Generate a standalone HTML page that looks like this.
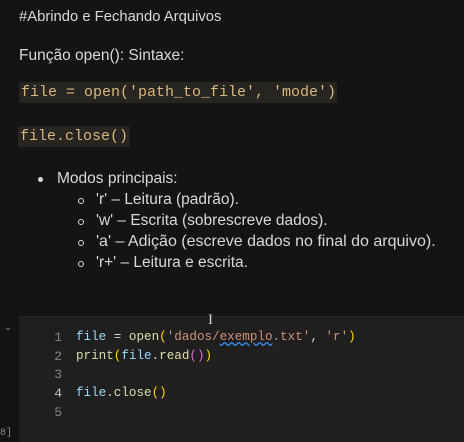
<!DOCTYPE html>
<html><head><style>
body{margin:0;width:464px;height:441px;background:#141414;overflow:hidden;position:relative;font-family:"Liberation Sans",sans-serif;color:#d8d8d8}
.t{position:absolute;font-size:15.5px;white-space:nowrap}
.c{position:absolute;font-family:"Liberation Mono",monospace;font-size:15px;color:#d9b77c;background:#262522;padding:2px 2px;border-radius:2px;white-space:nowrap}
.cell{position:absolute;left:19px;top:316px;width:445px;height:125px;background:#1f1f1f;border-top:1px solid #2a2a2a}
.ln{position:absolute;left:50px;width:12px;text-align:right;font-family:"Liberation Mono",monospace;font-size:13px;color:#858585}
.cd{position:absolute;left:76px;font-family:"Liberation Mono",monospace;font-size:12.6px;color:#9cdcfe;white-space:nowrap}
.y{color:#ffd700}.s{color:#ce9178}.f{color:#dcdcaa}.p{color:#da70d6}.w{color:#d4d4d4}
.dot{position:absolute;width:5px;height:5px;border-radius:50%;background:#d8d8d8}
.ring{position:absolute;width:4px;height:4px;border-radius:50%;border:1.3px solid #d8d8d8}
</style></head><body>
<div class="t" style="left:19px;top:9px;font-size:14.8px">#Abrindo e Fechando Arquivos</div>
<div class="t" style="left:19px;top:47px">Função open(): Sintaxe:</div>
<div class="c" style="left:19px;top:82px;width:314px">file = open('path_to_file', 'mode')</div>
<div class="c" style="left:18px;top:126px;width:108px">file.close()</div>
<div class="dot" style="left:38px;top:177px"></div>
<div class="t" style="left:57px;top:170px">Modos principais:</div>
<div class="ring" style="left:78px;top:198px"></div>
<div class="t" style="left:96px;top:191px">'r' – Leitura (padrão).</div>
<div class="ring" style="left:78px;top:219px"></div>
<div class="t" style="left:96px;top:212px">'w' – Escrita (sobrescreve dados).</div>
<div class="ring" style="left:78px;top:240px"></div>
<div class="t" style="left:96px;top:233px;font-size:16px">'a' – Adição (escreve dados no final do arquivo).</div>
<div class="ring" style="left:78px;top:261px"></div>
<div class="t" style="left:96px;top:254px">'r+' – Leitura e escrita.</div>
<div style="position:absolute;left:4px;top:322px;color:#888;font-size:10px">⌄</div>
<div style="position:absolute;left:0;top:428px;color:#888;font-size:10px;font-family:'Liberation Mono',monospace">8]</div>
<div class="cell"></div>
<div style="position:absolute;left:208px;top:312px;color:#ccc;font-size:15px;font-family:'Liberation Serif',serif">I</div>
<div class="ln" style="top:330px">1</div><div class="cd" style="top:330px">file <span class="w">=</span> <span class="f">open</span><span class="y">(</span><span class="s">'dados/<span style="text-decoration:underline wavy #3794ff">exemplo</span>.txt'</span><span class="w">,</span> <span class="s">'r'</span><span class="y">)</span></div>
<div class="ln" style="top:349px">2</div><div class="cd" style="top:349px"><span class="f">print</span><span class="y">(</span>file<span class="w">.</span><span class="f">read</span><span class="p">()</span><span class="y">)</span></div>
<div class="ln" style="top:367px">3</div>
<div class="ln" style="top:386px;color:#c6c6c6">4</div><div class="cd" style="top:386px">file<span class="w">.</span><span class="f">close</span><span class="y">()</span></div>
<div class="ln" style="top:405px">5</div>
</body></html>
